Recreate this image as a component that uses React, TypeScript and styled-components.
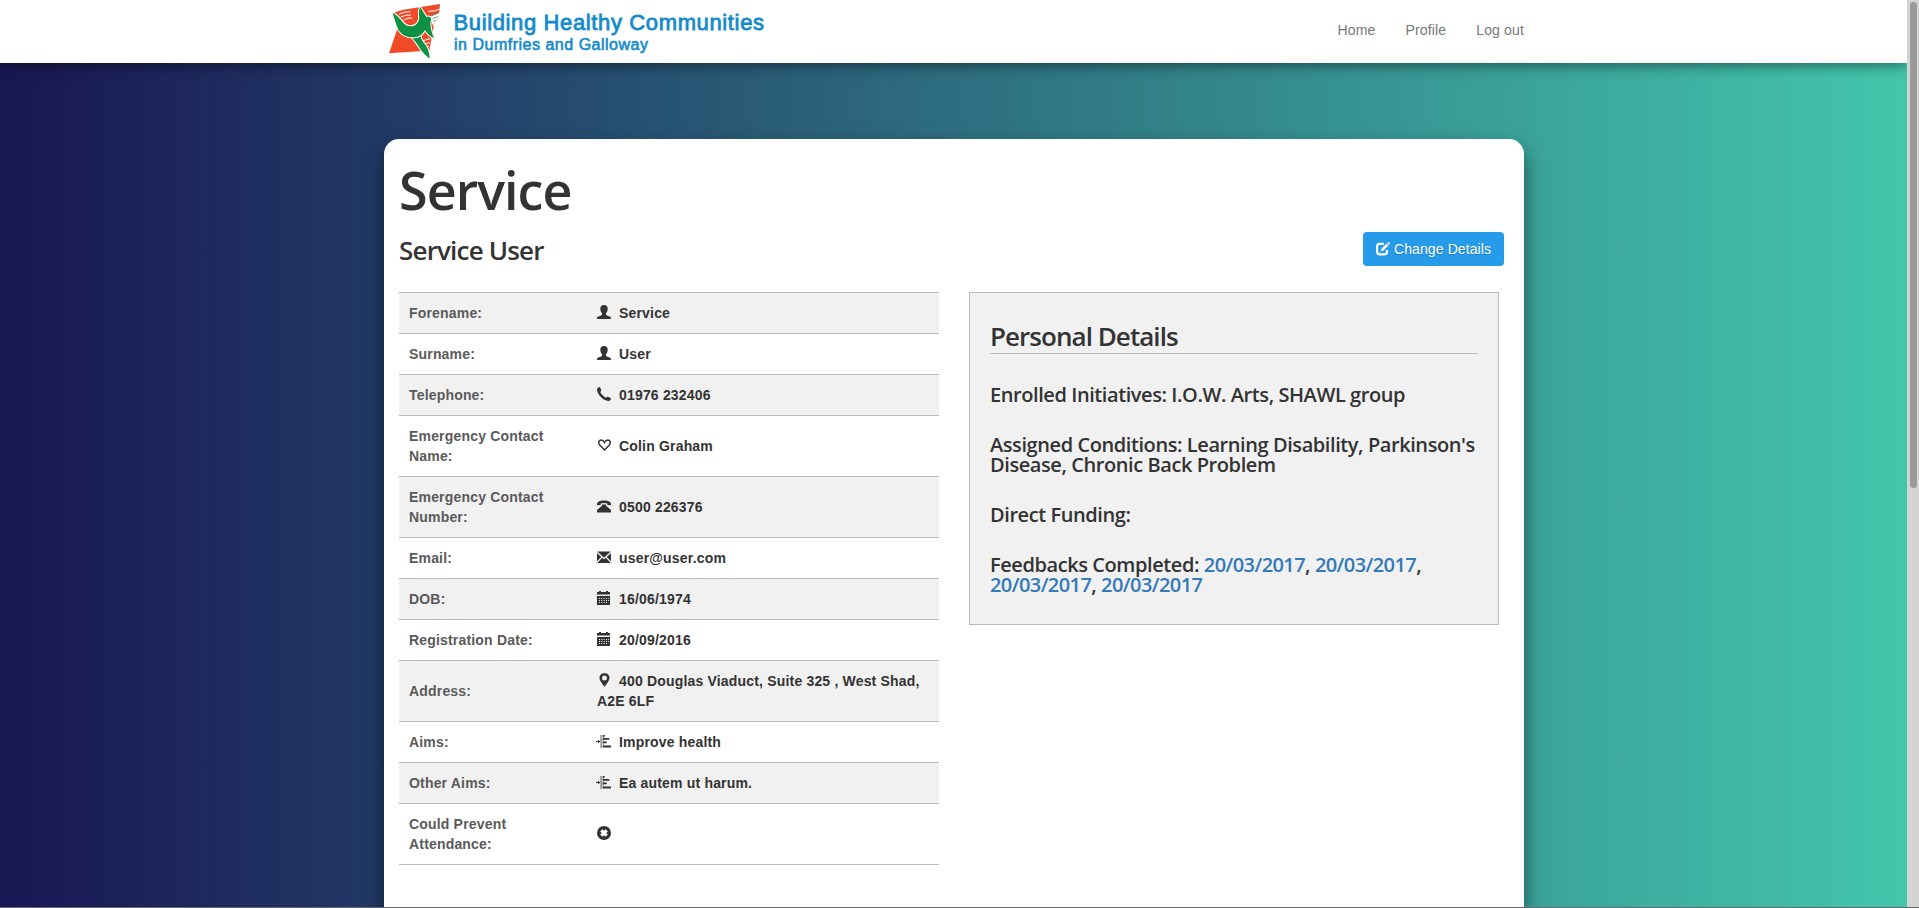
import React from "react";
import styled, { createGlobalStyle } from "styled-components";

const Global = createGlobalStyle`
  * { box-sizing: border-box; }
  body {
    margin: 0;
    overflow: hidden;
    font-family: "Liberation Sans", Arial, sans-serif;
    font-size: 14px;
    line-height: 20px;
    color: #333;
  }
`;

const Shell = styled.div`
  display: grid;
  grid-template-columns: 1fr 12px;
  grid-template-rows: 907px 1px;
  height: 908px;
`;

const Page = styled.div`
  display: flex;
  flex-direction: column;
  overflow: hidden;
  background: linear-gradient(to right, #191654, #43c6ac);
`;

const BottomEdge = styled.div`
  grid-column: 1 / -1;
  background: #67686c;
`;

const ScrollTrack = styled.div`
  background: #d4d4d4;
  padding: 2px 2px 0 3px;
`;

const ScrollThumb = styled.div`
  height: 486px;
  border-radius: 4px;
  background: #9b9b9d;
`;

const Header = styled.header`
  flex: none;
  height: 63px;
  background: #fff;
  box-shadow: 0 3px 12px rgba(0, 0, 0, 0.45);
`;

const HeaderInner = styled.div`
  display: flex;
  justify-content: space-between;
  width: 1140px;
  margin-left: 384px;
`;

const Nav = styled.nav`
  display: flex;
  gap: 30px;
  padding-top: 20px;
`;

const NavLink = styled.a`
  color: #777;
  letter-spacing: 0.15px;
`;

const Card = styled.main`
  flex: 1;
  width: 1140px;
  margin: 76px 0 0 384px;
  padding: 21px 0 0 15px;
  border-radius: 15px 15px 0 0;
  background: #fff;
  box-shadow: 0 10px 20px rgba(0, 0, 0, 0.5);
`;

const Title = styled.h1`
  margin: 0;
  font: 600 52px/60px "Open Sans", sans-serif;
  letter-spacing: -0.95px;
`;

const SubRow = styled.div`
  display: flex;
  align-items: center;
  justify-content: space-between;
  margin: 12px 20px 26px 0;
`;

const SubTitle = styled.h2`
  margin: 0;
  padding-top: 2px;
  font: 600 26px/30px "Open Sans", sans-serif;
  letter-spacing: -0.82px;
`;

const Button = styled.button`
  display: flex;
  align-items: center;
  gap: 4px;
  width: 141px;
  height: 34px;
  padding: 0 0 0 13px;
  border: 0;
  border-radius: 4px;
  background: #269bea;
  color: #fff;
  font: 14px/20px "Liberation Sans", Arial, sans-serif;
  letter-spacing: 0.1px;
  text-shadow: 0 1px 1px rgba(0, 0, 0, 0.2);
`;

const Columns = styled.div`
  display: flex;
  align-items: flex-start;
  gap: 30px;
`;

const Table = styled.table`
  width: 540px;
  table-layout: fixed;
  border-collapse: separate;
  border-spacing: 0;
  border-bottom: 1px solid #bbb;
  font-weight: bold;
  letter-spacing: 0.18px;
`;

const Row = styled.tr`
  &:nth-child(odd) {
    background: #f1f1f1;
  }
`;

const Label = styled.th`
  width: 188px;
  padding: 10px;
  border-top: 1px solid #bbb;
  color: #5a5a5a;
  text-align: left;
  vertical-align: middle;
`;

const Value = styled.td`
  padding: 10px;
  border-top: 1px solid #bbb;
  vertical-align: middle;
`;

const Glyph = styled.svg`
  width: 14px;
  height: 14px;
  margin-right: 8px;
  vertical-align: -1px;
  overflow: visible;
  fill: currentColor;
`;

const Panel = styled.section`
  width: 530px;
  padding: 30px 20px;
  border: 1px solid #bbb;
  background: #f1f1f1;
`;

const PanelTitle = styled.h3`
  margin: 0;
  padding-bottom: 4px;
  border-bottom: 1px solid #bbb;
  font: 600 26px/26px "Open Sans", sans-serif;
  letter-spacing: -0.95px;
`;

const Details = styled.div`
  padding-top: 1px;
  margin-bottom: -1px;
`;

const Detail = styled.p`
  margin: 30px 0 0;
  font: 600 20px/20px "Open Sans", sans-serif;
  letter-spacing: -0.42px;
`;

const DateLink = styled.a`
  color: #337ab7;
  letter-spacing: -0.58px;
`;

const figure =
  "M68 38C78 43 88 53 97 65c10 14 28 18 40 9 10-8 12-18 10-29-1-9 0-16 3-24 5 7 13 19 19 30 3-2 7-2 11 0 4 3 5 10 1 14 0 17 4 33 11 49-11-4-20-12-27-24-7 14-19 21-33 22-21 1-37-7-47-23-6-14-12-34-17-51z";
const leg =
  "M125 112c10 3 19 1 27-4 0 7 5 15 13 25 8 10 14 27 14 43-11-8-20-17-28-29-8-12-17-25-26-35z";

const Logo = () => (
  <svg width="390" height="62" viewBox="0 0 390 62">
    <g transform="translate(-14 0) scale(0.33333)">
      <path fill="#f04a28" d="M74 37 100 29 210 12 206 55 194 62 178 152 150 154 57 160 82 86z" />
      <path
        fill="none"
        stroke="#fff"
        strokeWidth="3"
        strokeLinecap="round"
        d="M88 42Q104 34 120 35M93 51Q108 43 122 45M101 60Q114 52 126 54M160 122 180 116M163 132 178 128M165 141 176 139M176 34Q192 35 208 28"
      />
      <path fill="#fff" d="M180 50 208 38 206 56 193 66 190 80z" />
      <g fill="#0d9243" stroke="#fff" strokeWidth="6" strokeLinejoin="round" paintOrder="stroke">
        <path d={leg} />
        <path d={figure} />
      </g>
      <path fill="none" stroke="#6dac8c" strokeWidth="3" strokeLinecap="round" d="M184 48 204 40M188 56 203 50M191 64 199 60" />
    </g>
    <g fill="#138bcb" stroke="#138bcb" fontFamily="Liberation Sans, Arial, sans-serif">
      <text x="69.5" y="30" fontSize="22" strokeWidth="0.8" textLength="310.5" lengthAdjust="spacing">Building Healthy Communities</text>
      <text x="70" y="50" fontSize="16" strokeWidth="0.6" textLength="194" lengthAdjust="spacing">in Dumfries and Galloway</text>
    </g>
  </svg>
);

const icons: Record<string, React.ReactNode> = {
  user: <path d="M7 0C4.500 0 3.300 1.300 3.300 3.500c0 2 .6 3.600 1.700 4.700v1.200C4.800 10.400 2.500 10.900 1 11.600.3 12 0 12.800 0 14h14c0-1.200-.3-2-1-2.400-1.500-.7-3.800-1.200-4-2.200V8.200c1.100-1.100 1.700-2.700 1.700-4.700C10.700 1.300 9.500 0 7 0z" />,
  phone: <path d="M1 .7 2.500 0C3.200 0 4.500 3.200 4.300 3.700L3.200 5C4 7 6.900 9.900 9 10.800l1.300-1.100c.5-.2 3.700 1.200 3.700 1.800-.2 1.400-1.300 2.400-2.700 2.400C6 13.600.4 8 0 2.600 0 1.800.4 1 1 .7z" />,
  heart: <path fill="none" stroke="currentColor" strokeWidth="1.500" d="M7.500 12 2.500 6.700C.8 4.600 1.900 2 4.200 1.900 5.800 1.900 6.800 3 7.500 4.300 8.200 3 9.200 1.900 10.800 1.900c2.300.1 3.400 2.700 1.700 4.800z" />,
  phoneAlt: (
    <>
      <path d="M0 5.200C.2 2.600 2.500 1.400 7 1.400s6.800 1.200 7 3.800v.8l-3.600.3V4.400C8.500 3.700 5.500 3.700 3.600 4.400v1.900L0 6z" />
      <path d="M5 5.500h4v1.300l4.200 3.400c.6.5.8 1 .8 1.700v1.600H0v-1.600c0-.7.2-1.200.8-1.700L5 6.800z" />
    </>
  ),
  mail: <path d="M.3 1.500h13.400L7 7.700zM0 2.900l4.300 4L0 11.300zM14 2.900v8.400L9.700 6.900zM5.200 7.700 7 9.300l1.800-1.600 5 5.300H.2z" />,
  calendar: (
    <>
      <path d="M2 0h2v1h5V0h2v1h2v2H0V1h2z" />
      <path opacity=".55" d="M0 3h13v1H0z" />
      <path fillRule="evenodd" d="M0 5h13v9H0zM2 7v1h1V7zM4.300 7v1h1V7zM6.600 7v1h1V7zM9 7v1h1V7zM2 9v1h1V9zM4.300 9v1h1V9zM6.600 9v1h1V9zM9 9v1h1V9zM2 11v1h1v-1zM4.300 11v1h1v-1zM6.600 11v1h1v-1zM9 11v1h1v-1zM11.200 7v1h.8V7zM11.200 9v1h.8V9z" />
    </>
  ),
  marker: <path fillRule="evenodd" d="M7.500.3c3 0 5 2 5 4.700 0 2.600-3 6-5 9-2-3-5-6.400-5-9 0-2.700 2-4.700 5-4.700zm0 2.300a2.500 2.500 0 1 0 0 5 2.500 2.500 0 0 0 0-5z" />,
  aims: (
    <>
      <path d="M-1 7h2V5.800L3.400 7.500 1 9.200V8h-2z" />
      <path opacity=".75" d="M3.500 1h1.100v13H3.500z" />
      <path opacity=".6" d="M5.700 2h1v11h-1z" />
      <path d="M5.700 1h2v1.800h-2zM5.700 3.900h6.600v1.900H5.700zM5.700 7.500h4.100v1.800H5.700zM5.700 11.600H14v2H5.700z" />
    </>
  ),
  remove: (
    <>
      <circle cx="7" cy="7" r="7" />
      <path stroke="#fff" strokeWidth="3.200" d="m4.300 4.300 5.400 5.400m0-5.400-5.400 5.400" />
    </>
  ),
};

const rows = [
  ["Forename:", "user", "Service"],
  ["Surname:", "user", "User"],
  ["Telephone:", "phone", "01976 232406"],
  ["Emergency Contact Name:", "heart", "Colin Graham"],
  ["Emergency Contact Number:", "phoneAlt", "0500 226376"],
  ["Email:", "mail", "user@user.com"],
  ["DOB:", "calendar", "16/06/1974"],
  ["Registration Date:", "calendar", "20/09/2016"],
  ["Address:", "marker", "400 Douglas Viaduct, Suite 325 , West Shad, A2E 6LF"],
  ["Aims:", "aims", "Improve health"],
  ["Other Aims:", "aims", "Ea autem ut harum."],
  ["Could Prevent Attendance:", "remove", ""],
];

const EditIcon = () => (
  <svg width="14" height="14" viewBox="0 0 14 14">
    <path fill="none" stroke="#fff" strokeWidth="2.200" d="M8 1.800H3.500Q1.100 1.800 1.100 4.300V9.800Q1.100 12.300 3.500 12.300H8.500Q11 12.300 11 9.800V8" />
    <path fill="#fff" d="m5 9.300.6-2.700L10.600 1.500l1.900 1.900-5 5.200zM11.300.9l.6-.6q.5-.4 1 0l.8.8q.4.500 0 1l-.6.6z" />
  </svg>
);

export default function App() {
  return (
    <Shell>
      <Global />
      <Page>
        <Header>
          <HeaderInner>
            <Logo />
            <Nav>
              <NavLink>Home</NavLink>
              <NavLink>Profile</NavLink>
              <NavLink>Log out</NavLink>
            </Nav>
          </HeaderInner>
        </Header>
        <Card>
          <Title>Service</Title>
          <SubRow>
            <SubTitle>Service User</SubTitle>
            <Button>
              <EditIcon />
              Change Details
            </Button>
          </SubRow>
          <Columns>
            <Table>
              <tbody>
                {rows.map(([label, icon, value]) => (
                  <Row key={label}>
                    <Label>{label}</Label>
                    <Value>
                      <Glyph viewBox="0 0 14 14">{icons[icon]}</Glyph>
                      {value}
                    </Value>
                  </Row>
                ))}
              </tbody>
            </Table>
            <Panel>
              <PanelTitle>Personal Details</PanelTitle>
              <Details>
                <Detail>Enrolled Initiatives: I.O.W. Arts, SHAWL group</Detail>
                <Detail>Assigned Conditions: Learning Disability, Parkinson's Disease, Chronic Back Problem</Detail>
                <Detail>Direct Funding:</Detail>
                <Detail>
                  Feedbacks Completed: <DateLink>20/03/2017</DateLink>, <DateLink>20/03/2017</DateLink>,{" "}
                  <DateLink>20/03/2017</DateLink>, <DateLink>20/03/2017</DateLink>
                </Detail>
              </Details>
            </Panel>
          </Columns>
        </Card>
      </Page>
      <ScrollTrack>
        <ScrollThumb />
      </ScrollTrack>
      <BottomEdge />
    </Shell>
  );
}
